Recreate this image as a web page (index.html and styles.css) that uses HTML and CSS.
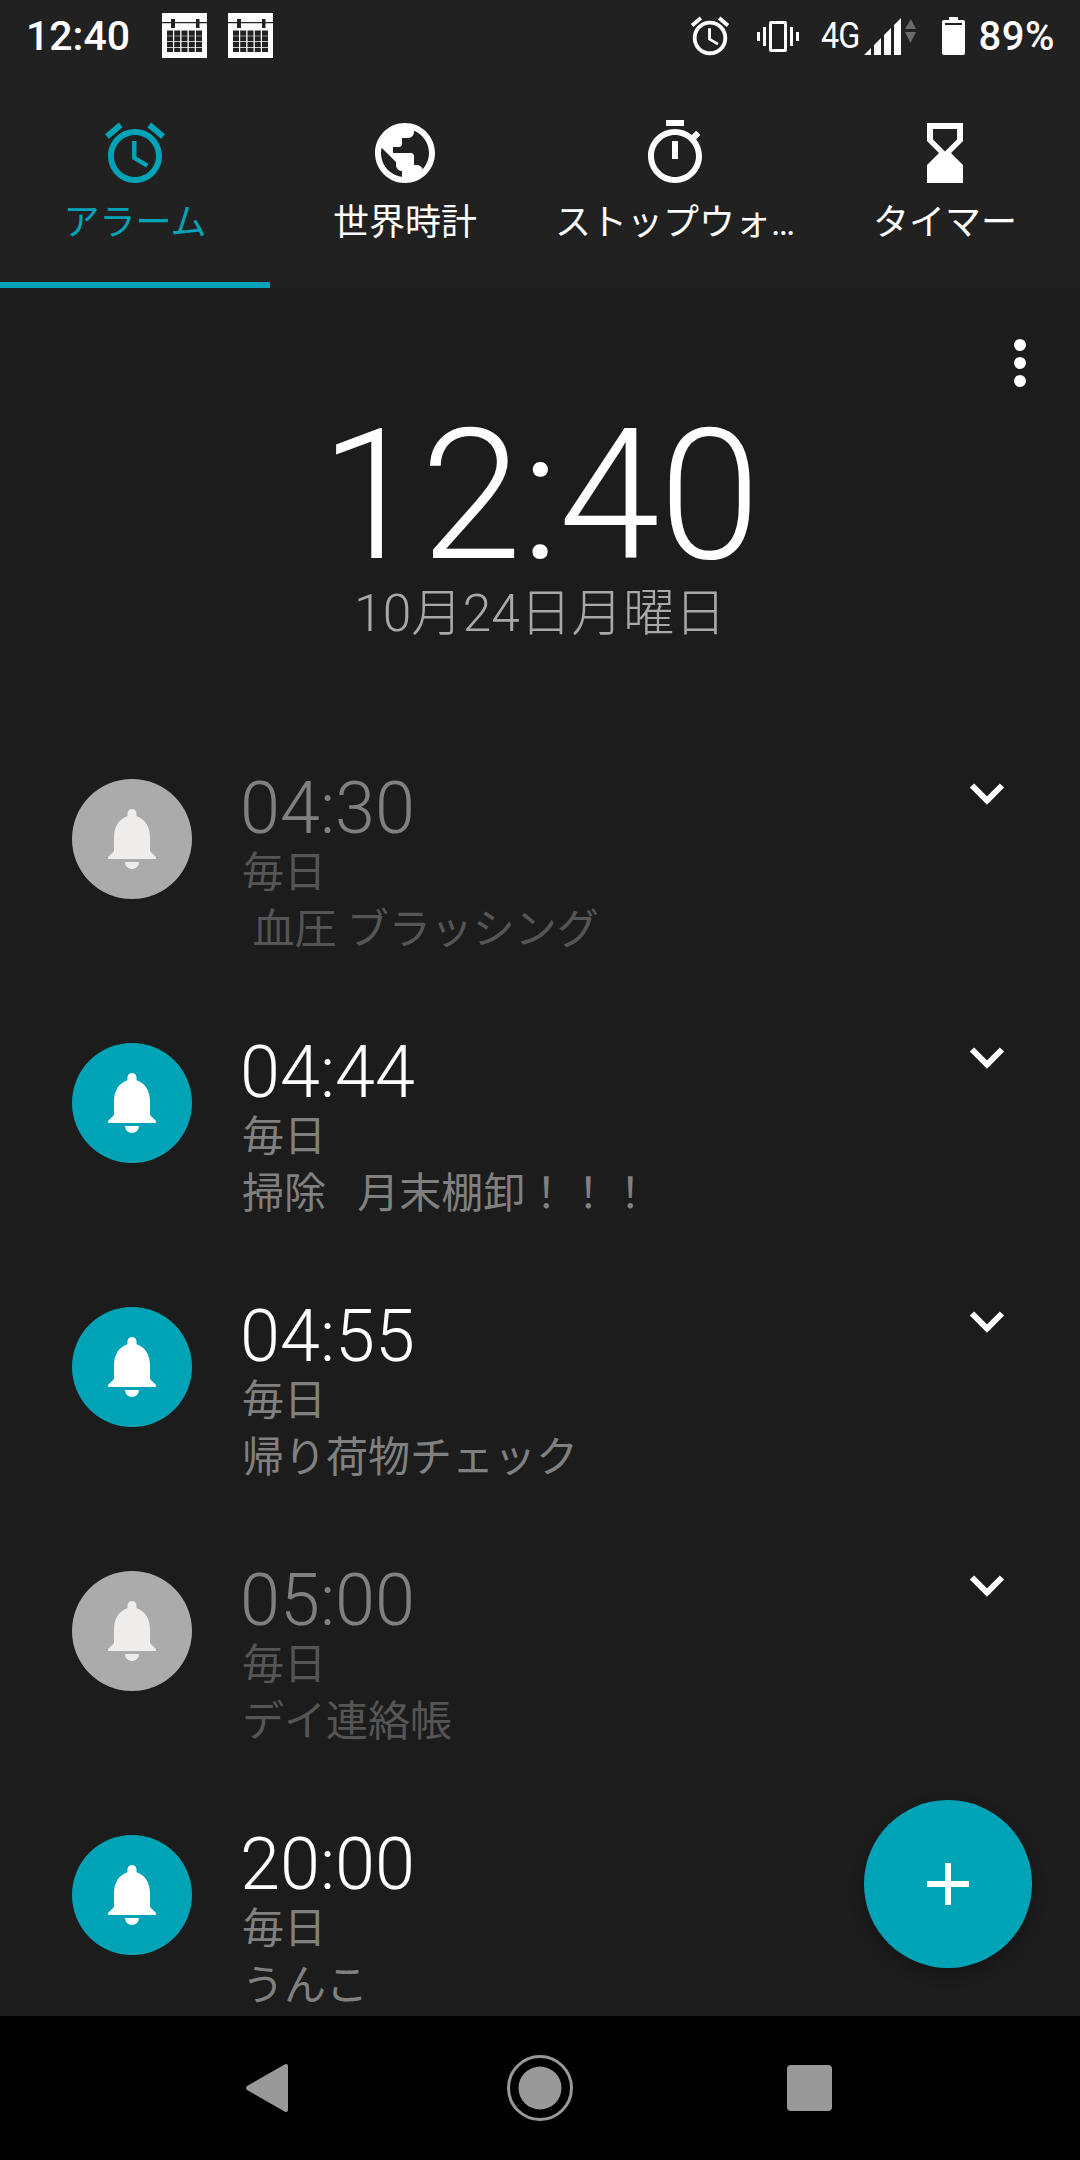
FILE: index.html
```html
<!DOCTYPE html>
<html lang="ja">
<head>
<meta charset="utf-8">
<title>アラーム</title>
<link rel="stylesheet" href="styles.css">
</head>
<body>
<svg class="defs" width="0" height="0" aria-hidden="true">
  <symbol id="bell" viewBox="0 0 48 60"><path d="M24 0a4.5 4.5 0 0 1 4.5 4.5v2.7C37 9.7 42 18 42 28v14l6 6v2H0v-2l6-6V28C6 18 11 9.700 19.500 7.200V4.500A4.500 4.500 0 0 1 24 0zM17 53h14a7 7 0 0 1-14 0z"/></symbol>
  <symbol id="chev" viewBox="0 0 36 23"><path d="M3 3.500l15 15 15-15" fill="none" stroke="currentColor" stroke-width="6"/></symbol>
  <symbol id="alarm" viewBox="0 0 24 24"><path d="M22 5.720l-4.600-3.860-1.290 1.530 4.600 3.860L22 5.720zM7.880 3.390L6.600 1.860 2 5.710l1.290 1.530 4.590-3.850zM12.500 8H11v6l4.750 2.850.75-1.230-4-2.370V8zM12 4c-4.970 0-9 4.030-9 9s4.030 9 9 9 9-4.030 9-9-4.030-9-9-9zm0 16c-3.870 0-7-3.130-7-7s3.130-7 7-7 7 3.130 7 7-3.130 7-7 7z"/></symbol>
  <symbol id="cal" viewBox="0 0 45 45"><path fill-rule="evenodd" d="M0 0h45v45H0zM0 9v1.200h9V15h4v-4.800h21V15h3.500v-4.800H45V9h-7.500V6H34v3H13V6H9v3zM5 17.500v5.300h6v-5.300zM12.200 17.500v5.300h6v-5.300zM19.500 17.500v5.300h6v-5.300zM26.800 17.500v5.300h6v-5.300zM34 17.500v5.300h6v-5.300zM5 23.300v5h6v-5zM12.200 23.300v5h6v-5zM19.500 23.300v5h6v-5zM26.800 23.300v5h6v-5zM34 23.300v5h6v-5zM5 29v5h6v-5zM12.200 29v5h6v-5zM19.500 29v5h6v-5zM26.800 29v5h6v-5zM34 29v5h6v-5zM5 34.700V39h6v-4.300zM12.200 34.700V39h6v-4.300zM19.500 34.700V39h6v-4.300zM26.800 34.700V39h6v-4.300zM34 34.700V39h6v-4.300z"/></symbol>
</svg>

<div class="phone">
  <header class="top">
    <div class="status">
      <span class="status-time">12:40</span>
      <svg class="cal"><use href="#cal"/></svg>
      <svg class="cal"><use href="#cal"/></svg>
      <span class="spacer"></span>
      <svg class="st-alarm"><use href="#alarm"/></svg>
      <svg class="st-vib" viewBox="0 0 42 31"><path fill-rule="evenodd" d="M14 0h14a2 2 0 0 1 2 2v27a2 2 0 0 1-2 2H14a2 2 0 0 1-2-2V2a2 2 0 0 1 2-2zm1 3v25h12V3zM6 6h3v19H6zM33 6h3v19h-3zM0 11h3v9H0zM39 11h3v9h-3z"/></svg>
      <span class="st-net">4G</span>
      <svg class="st-sig" viewBox="0 0 52 37"><path d="M0 37l7-7v7zM10 37V27l7-7v17zM20 37V17l7-7v27zM30 37V7l7-7v37z"/><path class="dim" d="M47 1l5 10H41zM41 14h11l-5.500 11z"/></svg>
      <svg class="st-bat" viewBox="0 0 23 38"><path fill-rule="evenodd" d="M7 0h9v3h5a2 2 0 0 1 2 2v31a2 2 0 0 1-2 2H2a2 2 0 0 1-2-2V5a2 2 0 0 1 2-2h5zM3 6v2h17V6z"/></svg>
      <span class="st-pct">89%</span>
    </div>
    <nav class="tabs">
      <div class="tab tab-on">
        <svg class="tab-ic"><use href="#alarm"/></svg>
        <span class="tab-label">アラーム</span>
      </div>
      <div class="tab">
        <svg class="tab-ic" viewBox="0 0 24 24"><path d="M12 2C6.480 2 2 6.480 2 12s4.480 10 10 10 10-4.480 10-10S17.520 2 12 2zm-1 17.930c-3.950-.49-7-3.850-7-7.930 0-.62.08-1.210.21-1.790L9 15v1c0 1.100.9 2 2 2v1.930zm6.900-2.540c-.26-.81-1-1.390-1.900-1.390h-1v-3c0-.55-.45-1-1-1H8v-2h2c.55 0 1-.45 1-1V7h2c1.100 0 2-.9 2-2v-.41c2.930 1.190 5 4.060 5 7.410 0 2.080-.8 3.970-2.100 5.390z"/></svg>
        <span class="tab-label">世界時計</span>
      </div>
      <div class="tab">
        <svg class="tab-ic" viewBox="0 0 24 24"><path d="M15 1H9v2h6V1zm-4 13h2V8h-2v6zm8.030-6.610l1.420-1.420c-.43-.51-.9-.99-1.410-1.410l-1.420 1.420C16.070 4.740 14.120 4 12 4c-4.970 0-9 4.030-9 9s4.020 9 9 9 9-4.030 9-9c0-2.120-.74-4.070-1.970-5.610zM12 20c-3.870 0-7-3.130-7-7s3.130-7 7-7 7 3.130 7 7-3.130 7-7 7z"/></svg>
        <span class="tab-label tab-long">ストップウォッチ</span>
      </div>
      <div class="tab">
        <svg class="tab-ic" viewBox="0 0 24 24"><path fill-rule="evenodd" d="M6 2v6l4 4-4 4v6h12v-6l-4-4 4-4V2zm2 2h8v3.500l-4 4-4-4z"/></svg>
        <span class="tab-label">タイマー</span>
      </div>
    </nav>
  </header>

  <main class="main">
    <button class="more" aria-label="メニュー"><i></i><i></i><i></i></button>
    <section class="clock">
      <div class="clock-time">12:40</div>
      <div class="clock-date">10月24日月曜日</div>
    </section>
    <section class="list">
      <article class="row off">
        <div class="badge"><svg class="bell"><use href="#bell"/></svg></div>
        <div class="info">
          <div class="time">04:30</div>
          <div class="sub">毎日</div>
          <div class="sub name"> 血圧 ブラッシング</div>
        </div>
        <svg class="chev"><use href="#chev"/></svg>
      </article>
      <article class="row">
        <div class="badge"><svg class="bell"><use href="#bell"/></svg></div>
        <div class="info">
          <div class="time">04:44</div>
          <div class="sub">毎日</div>
          <div class="sub name">掃除   月末棚卸！！！</div>
        </div>
        <svg class="chev"><use href="#chev"/></svg>
      </article>
      <article class="row">
        <div class="badge"><svg class="bell"><use href="#bell"/></svg></div>
        <div class="info">
          <div class="time">04:55</div>
          <div class="sub">毎日</div>
          <div class="sub name">帰り荷物チェック</div>
        </div>
        <svg class="chev"><use href="#chev"/></svg>
      </article>
      <article class="row off">
        <div class="badge"><svg class="bell"><use href="#bell"/></svg></div>
        <div class="info">
          <div class="time">05:00</div>
          <div class="sub">毎日</div>
          <div class="sub name">デイ連絡帳</div>
        </div>
        <svg class="chev"><use href="#chev"/></svg>
      </article>
      <article class="row">
        <div class="badge"><svg class="bell"><use href="#bell"/></svg></div>
        <div class="info">
          <div class="time">20:00</div>
          <div class="sub">毎日</div>
          <div class="sub name">うんこ</div>
        </div>
      </article>
    </section>
    <button class="fab" aria-label="追加"><svg viewBox="0 0 42 42"><path d="M18 0h6v18h18v6H24v18h-6V24H0v-6h18z"/></svg></button>
  </main>

  <footer class="navbar">
    <svg class="nav-back" viewBox="0 0 42 48"><path d="M40 0a2 2 0 0 1 2 2v44a2 2 0 0 1-2 2c-.6 0-1-.2-1.400-.6L1 26a3 3 0 0 1 0-4L38.600.6c.4-.4.8-.6 1.400-.6z"/></svg>
    <svg class="nav-home" viewBox="0 0 66 66"><circle cx="33" cy="33" r="31.500" fill="none" stroke="#999" stroke-width="3"/><circle cx="33" cy="33" r="21.500"/></svg>
    <div class="nav-recent"></div>
  </footer>
</div>
</body>
</html>
```
FILE: styles.css
```css
* { box-sizing: border-box; }
html, body { margin: 0; padding: 0; }
body { background: #1c1c1c; font-family: Roboto, "Noto Sans CJK JP", sans-serif; color: #fff; }
.defs { position: absolute; }
svg { fill: currentColor; display: block; }

.phone { width: 1080px; height: 2160px; display: flex; flex-direction: column; overflow: hidden; }

.top { background: #212121; flex: none; height: 288px; display: flex; flex-direction: column; }
.status { height: 72px; flex: none; display: flex; align-items: center; padding: 0 25px 0 26px; }
.status-time { font-size: 41px; font-weight: 500; width: 136px; }
.cal { width: 45px; height: 45px; margin-right: 21px; margin-top: -1px; }
.spacer { flex: 1; }
.st-alarm { width: 46px; height: 46px; margin-right: 24px; }
.st-vib { width: 42px; height: 31px; margin-right: 22px; }
.st-net { font-size: 36px; width: 38px; letter-spacing: -1px; margin-right: 5px; transform: scaleX(.9); transform-origin: left center; }
.st-sig { width: 52px; height: 37px; margin-right: 26px; }
.st-sig .dim { fill: #6a6a6a; }
.st-bat { width: 23px; height: 38px; margin-right: 14px; }
.st-pct { font-size: 40px; font-weight: 500; letter-spacing: .5px; }

.tabs { flex: 1; display: grid; grid-template-columns: repeat(4, 270px); }
.tab { display: flex; flex-direction: column; align-items: center; padding: 45px 10px 0; border-bottom: 6px solid transparent; min-width: 0; }
.tab-on { color: #01a4b7; border-bottom-color: #01a4b7; }
.tab-ic { width: 72px; height: 72px; flex: none; }
.tab-label { font-size: 36px; line-height: 50px; margin-top: 9px; max-width: 100%; white-space: nowrap; overflow: hidden; text-overflow: ellipsis; }
.tab-long { padding-left: 5px; }

.main { flex: 1; min-height: 0; position: relative; overflow: hidden; background: #1c1c1c; }
.more { position: absolute; top: 51px; right: 54px; width: 12px; padding: 0; border: 0; background: none; display: flex; flex-direction: column; align-items: center; gap: 6px; }
.more i { width: 12px; height: 12px; border-radius: 50%; background: #fff; }

.clock { display: flex; flex-direction: column; align-items: center; padding-top: 119px; }
.clock-time { font-size: 182px; font-weight: 300; line-height: 178px; letter-spacing: -.5px; }
.clock-date { font-size: 51.5px; line-height: 60px; color: #a8a8a8; font-weight: 300; margin-top: -1px; }

.list { padding-top: 135px; }
.row { height: 264px; display: flex; align-items: flex-start; padding: 0 0 0 72px; position: relative; }
.badge { width: 120px; height: 120px; border-radius: 50%; background: #01a4b7; color: #fff; flex: none; display: flex; align-items: center; justify-content: center; }
.bell { width: 48px; height: 60px; }
.info { margin-left: 48px; flex: 1; margin-top: -6px; }
.time { font-size: 72px; line-height: 71px; font-weight: 300; color: #fff; }
.sub { font-size: 42px; line-height: 57px; color: #808080; white-space: pre; padding-left: 2px; }
.chev { width: 36px; height: 23px; color: #fff; flex: none; margin: 3px 75px 0 0; }
.off .badge { background: #ababab; color: #efecec; }
.off .time { color: #808080; }
.off .sub { color: #555; }

.fab { position: absolute; left: 864px; top: 1512px; width: 168px; height: 168px; padding: 63px; border: 0; border-radius: 50%; background: #01a4b7; color: #fff; box-shadow: 0 6px 14px rgba(0,0,0,.28); }
.fab svg { width: 42px; height: 42px; }

.navbar { height: 144px; flex: none; background: #000; color: #999; display: flex; align-items: center; justify-content: center; padding-right: 2px; }
.nav-back { width: 42px; height: 48px; }
.nav-home { width: 66px; height: 66px; margin: 0 214px 0 219px; }
.nav-recent { width: 45px; height: 46px; border-radius: 4px; background: #999; }
```
